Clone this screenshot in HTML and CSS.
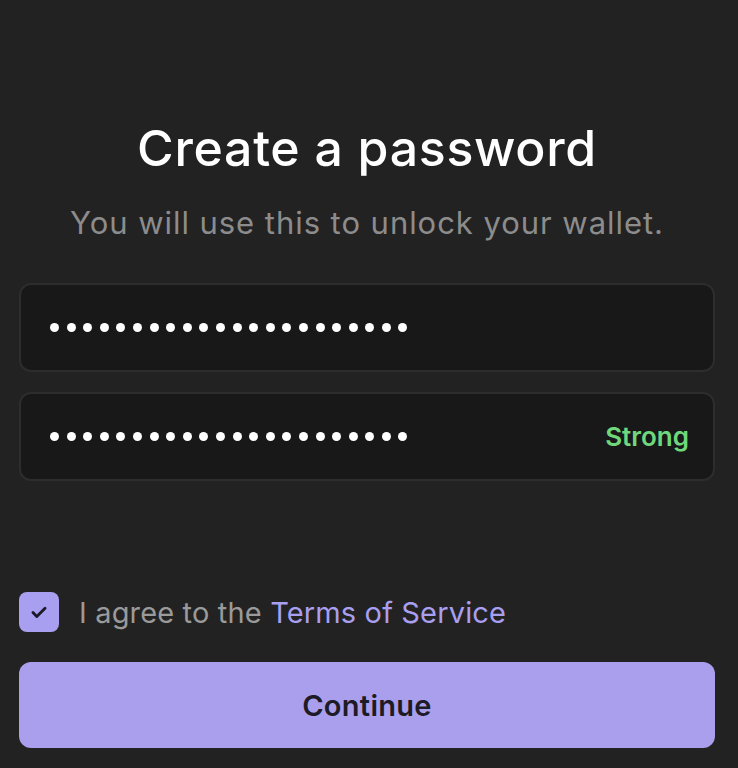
FILE: index.html
```html
<!DOCTYPE html>
<html lang="en">
<head>
    <meta charset="UTF-8">
    <meta name="viewport" content="width=device-width, initial-scale=1.0">
    <title>Create a password</title>
    <link rel="stylesheet" href="styles.css">
</head>
<body>

<div class="screen">
    <h1 class="title">Create a password</h1>
    <p class="subtitle">You will use this to unlock your wallet.</p>

    <div class="field">
        <div class="dots">
            <span></span><span></span><span></span><span></span><span></span><span></span>
            <span></span><span></span><span></span><span></span><span></span><span></span>
            <span></span><span></span><span></span><span></span><span></span><span></span>
            <span></span><span></span><span></span><span></span>
        </div>
    </div>
    <div class="field">
        <div class="dots">
            <span></span><span></span><span></span><span></span><span></span><span></span>
            <span></span><span></span><span></span><span></span><span></span><span></span>
            <span></span><span></span><span></span><span></span><span></span><span></span>
            <span></span><span></span><span></span><span></span>
        </div>
        <span class="strength">Strong</span>
    </div>

    <div class="spacer"></div>

    <label class="agree">
        <span class="checkbox">
            <svg width="22" height="22" viewBox="0 0 20 20"><path d="M4.5 10.5 L8 14 L15.5 6.5" fill="none" stroke="#1c1a2a" stroke-width="2.6" stroke-linecap="round" stroke-linejoin="round"/></svg>
        </span>
        <span class="agree-text">I agree to the <a href="#" class="link">Terms of Service</a></span>
    </label>

    <button class="continue">Continue</button>
</div>

</body>
</html>
```

FILE: styles.css
```css
body {
    margin: 0;
    background: #222222;
    font-family: Inter, "Noto Sans", sans-serif;
}
.screen {
    padding: 118px 23px 20px 19px;
    display: flex;
    flex-direction: column;
}
.title {
    margin: 0;
    text-align: center;
    color: #ffffff;
    font-size: 50px;
    font-weight: 500;
    letter-spacing: 0.7px;
    line-height: 60px;
}
.subtitle {
    margin: 25px 0 40px 0;
    text-align: center;
    color: #8c8c8c;
    font-size: 31px;
    letter-spacing: 0.95px;
    line-height: 40px;
}
.field {
    height: 85px;
    background: #181818;
    border: 2px solid #2d2d2d;
    border-radius: 12px;
    display: flex;
    align-items: center;
    justify-content: space-between;
    padding: 0 24px 0 29px;
    margin-bottom: 20px;
}
.dots {
    display: flex;
    gap: 7.6px;
}
.dots span {
    width: 9px;
    height: 9px;
    border-radius: 50%;
    background: #ffffff;
}
.strength {
    color: #6fd87c;
    font-size: 26px;
    font-weight: 600;
}
.spacer {
    height: 91px;
}
.agree {
    display: flex;
    align-items: center;
    gap: 20px;
    margin-bottom: 30px;
}
.checkbox {
    width: 40px;
    height: 40px;
    border-radius: 8px;
    background: #a99ff0;
    display: flex;
    align-items: center;
    justify-content: center;
}
.agree-text {
    color: #9a9a9a;
    font-size: 29px;
    letter-spacing: 0.15px;
}
.link {
    color: #a99ff0;
    text-decoration: none;
}
.continue {
    height: 86px;
    border: none;
    border-radius: 12px;
    background: #aa9fec;
    color: #1d1b26;
    font-family: Inter, "Noto Sans", sans-serif;
    font-size: 29px;
    font-weight: 600;
    letter-spacing: 0.3px;
}
```
